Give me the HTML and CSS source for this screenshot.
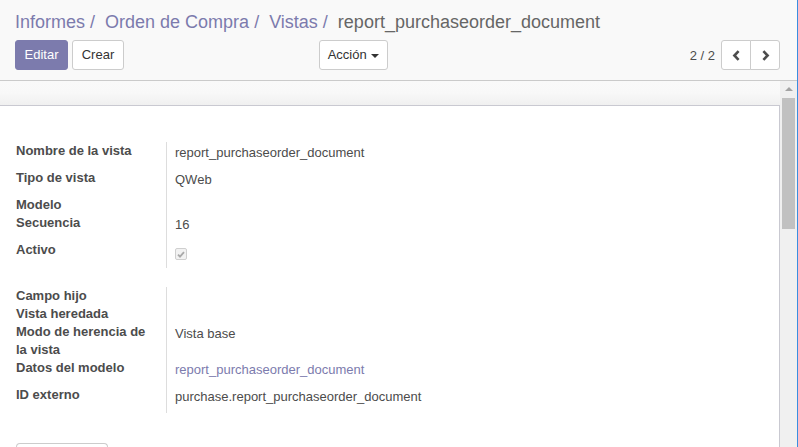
FILE: index.html
```html
<!DOCTYPE html>
<html lang="es">
<head>
<meta charset="utf-8">
<title>report_purchaseorder_document</title>
<link rel="stylesheet" href="styles.css">
</head>
<body>
<div class="app">
  <div class="cp">
    <ol class="breadcrumb">
      <li><a class="bc-link">Informes</a></li>
      <li><a class="bc-link">Orden de Compra</a></li>
      <li><a class="bc-link">Vistas</a></li>
      <li class="active">report_purchaseorder_document</li>
    </ol>
    <div class="cp-row">
      <div class="cp-left">
        <div class="cp-buttons">
          <button class="btn btn-primary">Editar</button>
          <button class="btn btn-default">Crear</button>
        </div>
        <button class="btn btn-default btn-action">Acción <span class="caret"></span></button>
      </div>
      <div class="cp-right">
        <span class="pager-value">2 / 2</span>
        <div class="btn-group">
          <button class="btn btn-default btn-icon" aria-label="Anterior">
            <svg width="9" height="11" viewBox="0 0 9 11"><path d="M6.6 1.2 L2.4 5.5 L6.6 9.8" fill="none" stroke="#4c4c4c" stroke-width="2.6"/></svg>
          </button>
          <button class="btn btn-default btn-icon" aria-label="Siguiente">
            <svg width="9" height="11" viewBox="0 0 9 11"><path d="M2.4 1.2 L6.6 5.5 L2.4 9.8" fill="none" stroke="#4c4c4c" stroke-width="2.6"/></svg>
          </button>
        </div>
      </div>
    </div>
  </div>
  <div class="content">
    <div class="scroll">
      <div class="sheet-bg"></div>
      <div class="sheet">
        <div class="group">
          <div class="lbl">Nombre de la vista</div><div class="val">report_purchaseorder_document</div>
          <div class="lbl">Tipo de vista</div><div class="val">QWeb</div>
          <div class="lbl">Modelo</div><div class="val empty"></div>
          <div class="lbl">Secuencia</div><div class="val">16</div>
          <div class="lbl">Activo</div><div class="val"><span class="checkbox"><svg width="8" height="7" viewBox="0 0 8 7"><path d="M1 3.6 L3 5.6 L7 1.2" fill="none" stroke="#a9a9a9" stroke-width="1.8"/></svg></span></div>
        </div>
        <div class="group group2">
          <div class="lbl">Campo hijo</div><div class="val empty"></div>
          <div class="lbl">Vista heredada</div><div class="val empty"></div>
          <div class="lbl">Modo de herencia de la vista</div><div class="val">Vista base</div>
          <div class="lbl">Datos del modelo</div><div class="val"><a class="val-link">report_purchaseorder_document</a></div>
          <div class="lbl">ID externo</div><div class="val">purchase.report_purchaseorder_document</div>
        </div>
        <div class="tabs"><div class="tab"></div></div>
      </div>
    </div>
    <div class="sbar">
      <div class="sbar-arrow"></div>
      <div class="sbar-thumb"></div>
    </div>
  </div>
</div>
</body>
</html>
```
FILE: styles.css
```css
html, body {
  margin: 0;
  padding: 0;
  height: 447px;
  overflow: hidden;
}
body {
  font-family: "Liberation Sans", Arial, Helvetica, sans-serif;
  font-size: 13px;
  color: #4c4c4c;
  background: #ffffff;
}
.app {
  width: 797px;
  height: 447px;
  border-right: 1px solid #3a8ee0;
  display: flex;
  flex-direction: column;
}
.cp {
  background: #f9f9f9;
  border-bottom: 1px solid #cacaca;
  padding: 11px 17px 10px 15px;
  height: 59px;
}
.breadcrumb {
  list-style: none;
  margin: 0;
  padding: 0;
  display: flex;
  font-size: 18px;
  line-height: 22px;
  white-space: nowrap;
}
.breadcrumb li + li::before {
  content: "/\00a0";
  padding: 0 5px;
  color: #7c7bad;
}
.bc-link {
  color: #7c7bad;
}
.breadcrumb .active {
  color: #666666;
}
.cp-row {
  display: flex;
  margin-top: 7px;
  height: 30px;
}
.cp-left {
  width: 373px;
  display: flex;
  justify-content: space-between;
}
.cp-buttons {
  display: flex;
  gap: 4px;
}
.cp-right {
  flex: 1;
  display: flex;
  justify-content: flex-end;
  align-items: center;
}
.btn {
  font-family: inherit;
  font-size: 13px;
  height: 30px;
  margin: 0;
  padding: 0 12px;
  border-radius: 3px;
  border: 1px solid #cccccc;
  background: #ffffff;
  color: #333333;
  line-height: 28px;
  box-sizing: border-box;
  cursor: pointer;
}
.btn-primary {
  background: #7c7bad;
  border-color: #7c7bad;
  color: #ffffff;
  width: 53px;
  padding: 0;
}
.cp-buttons .btn-default {
  width: 52px;
  padding: 0;
}
.btn-action {
  width: 69px;
  padding: 0;
}
.caret {
  display: inline-block;
  width: 0;
  height: 0;
  margin-left: 1px;
  vertical-align: middle;
  border-top: 4px solid #333333;
  border-left: 4px solid transparent;
  border-right: 4px solid transparent;
}
.pager-value {
  margin-right: 6px;
  color: #4c4c4c;
}
.btn-group {
  display: flex;
}
.btn-icon {
  width: 30px;
  padding: 0;
  display: flex;
  align-items: center;
  justify-content: center;
}
.btn-group .btn-icon:first-child {
  border-radius: 3px 0 0 3px;
}
.btn-group .btn-icon:last-child {
  border-radius: 0 3px 3px 0;
  margin-left: -1px;
}
.content {
  flex: 1;
  display: flex;
  min-height: 0;
}
.scroll {
  flex: 1;
  overflow: hidden;
}
.sheet-bg {
  height: 24px;
  background: linear-gradient(#f9f9f9 0%, #f8f8f8 50%, #f0f0f0 100%);
}
.sheet {
  border-top: 1px solid #c9c9d1;
  border-right: 1px solid #c9c9d1;
  background: #ffffff;
  padding: 36px 0 0 16px;
  height: 400px;
}
.group {
  display: grid;
  grid-template-columns: 151px 1fr;
  line-height: 18px;
}
.group2 {
  margin-top: 19px;
}
.lbl {
  font-weight: bold;
  padding-right: 8px;
  border-right: 1px solid #dddddd;
}
.val {
  padding: 2px 0 7px 8px;
}
.val.empty {
  padding: 0;
}
.val-link {
  color: #7c7bad;
}
.checkbox {
  display: inline-flex;
  align-items: center;
  justify-content: center;
  width: 10px;
  height: 10px;
  margin-top: 5px;
  border: 1px solid #cfcfcf;
  border-radius: 2px;
  background: #f2f2f2;
  vertical-align: top;
}
.tabs {
  margin-top: 30px;
}
.tab {
  width: 90px;
  height: 20px;
  border: 1px solid #cccccc;
  border-bottom: none;
  border-radius: 4px 4px 0 0;
}
.sbar {
  width: 17px;
  background: #f0f0f0;
  display: flex;
  flex-direction: column;
  align-items: center;
}
.sbar-arrow {
  margin-top: 6px;
  width: 0;
  height: 0;
  border-bottom: 4px solid #a3a3a3;
  border-left: 4px solid transparent;
  border-right: 4px solid transparent;
}
.sbar-thumb {
  margin-top: 7px;
  width: 13px;
  height: 131px;
  background: #c1c1c1;
}
```
